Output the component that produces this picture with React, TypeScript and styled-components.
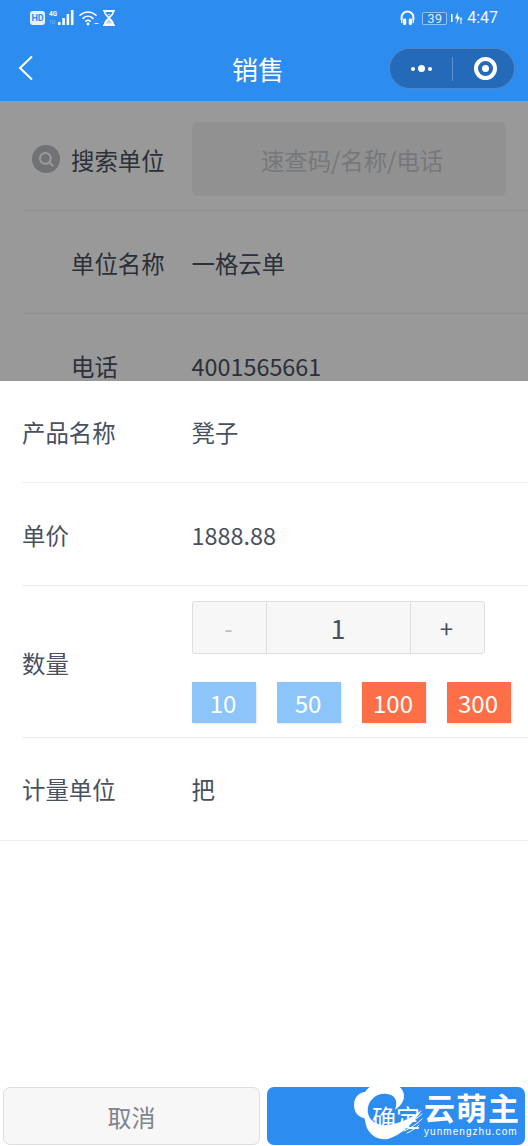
import React from 'react'
import styled, { createGlobalStyle } from 'styled-components'

const Global = createGlobalStyle`
  html, body { margin: 0; padding: 0; background: #fff; }
  body { font-family: "Noto Sans CJK SC", "Noto Sans", sans-serif; color: #495060; }
  * { box-sizing: border-box; }
`

const SignalIcon = () => (
  <svg width="26" height="18" viewBox="0 0 26 18">
    <text x="0" y="7" fontSize="8" fontWeight="700" fill="#fff" fontFamily="Roboto, sans-serif" textLength="8" lengthAdjust="spacingAndGlyphs">4G</text>
    <text x="0" y="15" fontSize="5" fill="rgba(255,255,255,.45)" fontFamily="Roboto, sans-serif">1U</text>
    {[3, 7, 11, 15].map((h, i) => (
      <rect key={i} x={9 + i * 4.3} y={16 - h} width="2.6" height={h} rx="0.6" fill="#fff" />
    ))}
  </svg>
)

const WifiIcon = () => (
  <svg width="20" height="16" viewBox="0 0 20 16" fill="none" stroke="#fff" strokeWidth="1.5" strokeLinecap="round">
    <path d="M1 5.2C5.6 .8 12.4 .8 17 5.2" />
    <path d="M4 8.4C7 5.6 11 5.6 14 8.4" />
    <path d="M6.8 11.2C8 10.2 10 10.2 11.2 11.2" />
    <circle cx="9" cy="14" r="1.4" fill="#fff" stroke="none" />
    <path d="M16 13.5h3" strokeWidth="1" />
  </svg>
)

const HourglassIcon = () => (
  <svg width="12" height="16" viewBox="0 0 12 16">
    <path d="M0 0h12v1.6h-1C11 5 8.2 6.6 7.2 8 8.2 9.4 11 11 11 14.4h1V16H0v-1.6h1C1 11 3.8 9.4 4.8 8 3.8 6.6 1 5 1 1.6H0z" fill="#fff" />
    <path d="M2.6 2h6.8C9.2 4 7 5.6 6 6.8 5 5.6 2.8 4 2.6 2z" fill="#2d8cf0" />
    <path d="M4.4 4h3.2L6 5.6z" fill="#cfe4fb" />
    <path d="M6 9.6c-.8 1-2.6 2-3 4h6c-.4-2-2.2-3-3-4z" fill="#2d8cf0" opacity=".35" />
  </svg>
)

const HeadsetIcon = () => (
  <svg width="15" height="16" viewBox="0 0 15 16" fill="none">
    <path d="M1.6 10V7.4a5.9 5.9 0 0 1 11.8 0V10" stroke="#fff" strokeWidth="2" />
    <rect x="3" y="8.4" width="3.2" height="6.6" rx="1.3" fill="#fff" />
    <rect x="8.8" y="8.4" width="3.2" height="6.6" rx="1.3" fill="#fff" />
    <path d="M1 9.5h1.4v3.4H1zM12.6 9.5H14v3.4h-1.4z" fill="#fff" />
  </svg>
)

const ChargeIcon = () => (
  <svg width="12" height="14" viewBox="0 0 12 14" fill="#fff">
    <rect x="0" y="3" width="1.6" height="8" />
    <path d="M6.8 1 4 7.5h2.2L5.4 13 9 5.8H6.8z" />
    <path d="M10 6l1.6 2.4h-1V13h-1.2V8.4h-1z" opacity=".8" />
  </svg>
)

const BackIcon = () => (
  <svg width="16" height="26" viewBox="0 0 16 26" fill="none" stroke="#fff" strokeWidth="2">
    <path d="M15 1.5 3 13l12 11.5" />
  </svg>
)

const SearchIcon = () => (
  <svg width="28" height="28" viewBox="0 0 28 28" fill="none">
    <circle cx="14" cy="14" r="14" fill="#bbbec4" />
    <circle cx="13.4" cy="13.4" r="5.4" stroke="#fff" strokeWidth="2" />
    <path d="M17.4 17.4l3.4 3.4" stroke="#fff" strokeWidth="2" strokeLinecap="round" />
  </svg>
)

const LogoMark = () => (
  <svg width="72" height="60" viewBox="0 0 72 60">
    <path
      d="M30 0C40-1 50 5 50 14C50 20 46 24 41 28C44 20 42 13 33 12C22 10 12 20 14 31C15 39 24 44 33 43C44 42 56 37 68 28C60 40 48 53 34 57C24 59 14 52 12 43C11 39 11 37 10 36C4 35 0 30 0 23C0 15 6 10 11 10C15 4 22 1 30 0Z"
      fill="#fff"
    />
    <g stroke="#fff" strokeWidth="1" fill="none" strokeLinecap="round">
      <path d="M46 47c8-4 15-9 22-15" />
      <path d="M50 49c7-3 13-7 18-12" />
      <path d="M53 51c5-2 9-5 12-8" />
    </g>
  </svg>
)

export default function App() {
  return (
    <>
      <Global />
      <S.Screen>
        <S.Header>
          <S.StatusBar>
            <S.StatusGroup>
              <S.HdBadge>HD</S.HdBadge>
              <SignalIcon />
              <WifiIcon />
              <HourglassIcon />
            </S.StatusGroup>
            <S.StatusGroup>
              <HeadsetIcon />
              <S.Battery>39</S.Battery>
              <ChargeIcon />
              <S.Clock>4:47</S.Clock>
            </S.StatusGroup>
          </S.StatusBar>
          <S.NavBar>
            <S.BackButton><BackIcon /></S.BackButton>
            <S.NavTitle>销售</S.NavTitle>
            <S.Capsule>
              <S.Dots><i /><b /><i /></S.Dots>
              <S.CapsuleDivider />
              <S.Target />
            </S.Capsule>
          </S.NavBar>
        </S.Header>

        <S.Body>
          <S.Page>
            <S.PageRow $height={110} $top={6}>
              <S.PageIcon><SearchIcon /></S.PageIcon>
              <S.SearchLabel>搜索单位</S.SearchLabel>
              <S.SearchInput>速查码/名称/电话</S.SearchInput>
            </S.PageRow>
            <S.PageRow $height={103} $top={2}>
              <S.PageIcon />
              <S.PageLabel>单位名称</S.PageLabel>
              <S.Value>一格云单</S.Value>
            </S.PageRow>
            <S.PageRow $height={103} $top={2}>
              <S.PageIcon />
              <S.PageLabel>电话</S.PageLabel>
              <S.Value>4001565661</S.Value>
            </S.PageRow>
          </S.Page>
          <S.Mask />

          <S.Sheet>
            <S.SheetRow $height={102}>
              <S.SheetLabel>产品名称</S.SheetLabel>
              <S.Value>凳子</S.Value>
            </S.SheetRow>
            <S.SheetRow $height={103} $top={2}>
              <S.SheetLabel>单价</S.SheetLabel>
              <S.Value>1888.88</S.Value>
            </S.SheetRow>
            <S.SheetRow $height={152}>
              <S.QuantityLabel>数量</S.QuantityLabel>
              <S.QuantityCol>
                <S.Stepper>
                  <S.StepButton $muted>-</S.StepButton>
                  <S.StepValue>1</S.StepValue>
                  <S.StepButton>+</S.StepButton>
                </S.Stepper>
                <S.Presets>
                  <S.Preset $color="#8cc5fa">10</S.Preset>
                  <S.Preset $color="#8cc5fa">50</S.Preset>
                  <S.Preset $color="#ff6f47">100</S.Preset>
                  <S.Preset $color="#ff6f47">300</S.Preset>
                </S.Presets>
              </S.QuantityCol>
            </S.SheetRow>
            <S.LastRow>
              <S.SheetLabel>计量单位</S.SheetLabel>
              <S.Value>把</S.Value>
            </S.LastRow>
            <S.Footer>
              <S.CancelButton>取消</S.CancelButton>
              <S.ConfirmButton>确定</S.ConfirmButton>
            </S.Footer>
          </S.Sheet>
        </S.Body>

        <S.Watermark>
          <LogoMark />
          <S.WatermarkText>
            <S.WatermarkName>云萌主</S.WatermarkName>
            <S.WatermarkUrl>yunmengzhu.com</S.WatermarkUrl>
          </S.WatermarkText>
        </S.Watermark>
      </S.Screen>
    </>
  )
}

interface RowProps {
  $height: number
  $top?: number
}

const labelText = `
  font-size: 23.4px;
  line-height: 34px;
`

const S = {
  Screen: styled.div`
    position: relative;
    width: 528px;
    height: 1146px;
    overflow: hidden;
    display: flex;
    flex-direction: column;
  `,
  Header: styled.div`
    height: 101px;
    flex-shrink: 0;
    background: #2d8cf0;
    color: #fff;
  `,
  StatusBar: styled.div`
    height: 36px;
    padding: 0 30px;
    display: flex;
    align-items: center;
    justify-content: space-between;
  `,
  StatusGroup: styled.div`
    display: flex;
    align-items: center;
    gap: 4px;
  `,
  HdBadge: styled.div`
    width: 15px;
    height: 14px;
    border-radius: 3px;
    background: #e8f2fd;
    color: #2d8cf0;
    font: 700 9px/14px Roboto, sans-serif;
    text-align: center;
  `,
  Battery: styled.div`
    width: 25px;
    height: 13px;
    margin-left: 3px;
    border: 1px solid rgba(255, 255, 255, 0.5);
    border-radius: 2px;
    background: rgba(20, 90, 170, 0.2);
    font: 400 13px/11px Roboto, sans-serif;
    text-align: center;
    color: #dcebfc;
  `,
  Clock: styled.div`
    font: 400 16px/18px Roboto, sans-serif;
    color: #f2f7fe;
  `,
  NavBar: styled.div`
    position: relative;
    height: 65px;
    display: flex;
    align-items: center;
    justify-content: center;
  `,
  BackButton: styled.div`
    position: absolute;
    left: 17px;
    top: 19px;
    line-height: 0;
  `,
  NavTitle: styled.div`
    font-size: 26px;
    line-height: 40px;
    margin: 1px 12px 0 0;
  `,
  Capsule: styled.div`
    position: absolute;
    right: 13px;
    top: 12px;
    width: 126px;
    height: 41px;
    border-radius: 21px;
    border: 1px solid rgba(255, 255, 255, 0.2);
    background: #2569b9;
    display: flex;
    align-items: center;
  `,
  Dots: styled.div`
    width: 62px;
    display: flex;
    align-items: center;
    justify-content: center;
    gap: 3px;
    i {
      width: 4px;
      height: 4px;
      border-radius: 50%;
      background: #fff;
    }
    b {
      width: 7px;
      height: 7px;
      border-radius: 50%;
      background: #fff;
    }
  `,
  CapsuleDivider: styled.div`
    width: 1px;
    height: 24px;
    background: rgba(255, 255, 255, 0.25);
  `,
  Target: styled.div`
    width: 23px;
    height: 23px;
    margin-left: 21px;
    border-radius: 50%;
    border: 4px solid #fff;
    display: flex;
    align-items: center;
    justify-content: center;
    &::after {
      content: '';
      width: 7px;
      height: 7px;
      border-radius: 50%;
      background: #fff;
    }
  `,
  Body: styled.div`
    position: relative;
    flex: 1;
  `,
  Page: styled.div`
    padding-left: 22px;
  `,
  PageRow: styled.div<RowProps>`
    height: ${props => props.$height}px;
    padding-top: ${props => props.$top ?? 0}px;
    display: flex;
    align-items: center;
    border-bottom: 1px solid #f0f0f0;
  `,
  PageIcon: styled.div`
    width: 49px;
    margin-left: 10px;
    margin-right: -10px;
    line-height: 0;
  `,
  PageLabel: styled.div`
    width: 121px;
    ${labelText}
  `,
  SearchLabel: styled.div`
    width: 121px;
    margin-top: 2px;
    ${labelText}
  `,
  SearchInput: styled.div`
    width: 314px;
    height: 74px;
    padding-left: 6px;
    border-radius: 6px;
    background: #f2f2f2;
    color: #c5c8cd;
    font-size: 23.4px;
    line-height: 76px;
    text-align: center;
  `,
  Value: styled.div`
    margin-left: -0.5px;
    ${labelText}
  `,
  Mask: styled.div`
    position: absolute;
    inset: 0;
    background: rgba(0, 0, 0, 0.4);
  `,
  Sheet: styled.div`
    position: absolute;
    left: 0;
    right: 0;
    top: 280px;
    bottom: 0;
    background: #fff;
    display: flex;
    flex-direction: column;
  `,
  SheetRow: styled.div<RowProps>`
    height: ${props => props.$height}px;
    padding-top: ${props => props.$top ?? 0}px;
    flex-shrink: 0;
    margin-left: 22px;
    display: flex;
    align-items: center;
    border-bottom: 1px solid #eeeeee;
  `,
  LastRow: styled.div`
    height: 103px;
    flex-shrink: 0;
    padding: 0 0 1px 22px;
    display: flex;
    align-items: center;
    border-bottom: 1px solid #eeeeee;
  `,
  SheetLabel: styled.div`
    width: 170px;
    ${labelText}
  `,
  QuantityLabel: styled.div`
    width: 170px;
    margin-top: 2px;
    ${labelText}
  `,
  QuantityCol: styled.div`
    display: flex;
    flex-direction: column;
    gap: 28px;
  `,
  Stepper: styled.div`
    width: 293px;
    height: 53px;
    display: flex;
    border: 1px solid #dddee1;
    border-radius: 3px;
    background: #f7f7f7;
  `,
  StepButton: styled.div<{ $muted?: boolean }>`
    width: 73px;
    padding-right: 2px;
    text-align: center;
    font-size: 24px;
    line-height: 51px;
    color: ${props => props.$muted ? '#bbbec4' : '#495060'};
  `,
  StepValue: styled.div`
    flex: 1;
    padding-right: 1px;
    text-align: center;
    font-size: 27px;
    line-height: 51px;
    border-left: 1px solid #dddee1;
    border-right: 1px solid #dddee1;
  `,
  Presets: styled.div`
    display: flex;
    gap: 21px;
  `,
  Preset: styled.div<{ $color: string }>`
    width: 64px;
    height: 41px;
    padding-right: 2px;
    background: ${props => props.$color};
    color: #fff;
    font-size: 24px;
    line-height: 42px;
    text-align: center;
    box-shadow: 1px 1px 2px rgba(0, 0, 0, 0.1);
  `,
  Footer: styled.div`
    margin-top: auto;
    padding: 0 3px;
    height: 59px;
    display: flex;
    gap: 7px;
  `,
  CancelButton: styled.div`
    width: 257px;
    height: 58px;
    border: 1px solid #dddee1;
    border-radius: 7px;
    background: #f7f7f7;
    color: #80848f;
    font-size: 24px;
    line-height: 58px;
    text-align: center;
  `,
  ConfirmButton: styled.div`
    width: 258px;
    height: 58px;
    border-radius: 7px;
    background: #2d8cf0;
    color: #fff;
    font-size: 24px;
    line-height: 60px;
    text-align: center;
  `,
  Watermark: styled.div`
    position: absolute;
    left: 354px;
    top: 1082px;
    display: flex;
    align-items: flex-start;
  `,
  WatermarkText: styled.div`
    margin-left: -2px;
    color: #fff;
  `,
  WatermarkName: styled.div`
    font-size: 31px;
    font-weight: 700;
    line-height: 38px;
    letter-spacing: 1px;
    margin-top: 6px;
  `,
  WatermarkUrl: styled.div`
    font: 400 10px/12px "Liberation Sans", sans-serif;
    letter-spacing: 1.05px;
  `,
}
